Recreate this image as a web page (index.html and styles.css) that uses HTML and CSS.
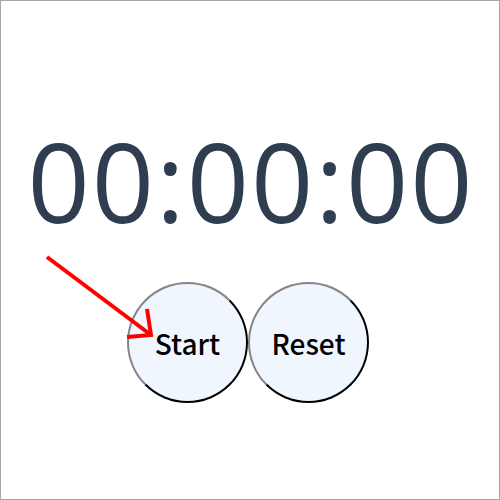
FILE: index.html
```html
<!DOCTYPE html>
<html>
<head>
<meta charset="utf-8">
<link rel="stylesheet" href="styles.css">
</head>
<body>
<div class="frame">
  <div class="timer">00:00:00</div>
  <div class="controls">
    <button class="btn">Start</button>
    <button class="btn">Reset</button>
  </div>
  <svg class="arrow" width="500" height="500" viewBox="0 0 500 500">
    <line x1="47" y1="257" x2="151" y2="335" stroke="#ff0000" stroke-width="4"/>
    <polyline points="147,309 151,335 127,337" fill="none" stroke="#ff0000" stroke-width="4"/>
  </svg>
</div>
</body>
</html>
```
FILE: styles.css
```css
html, body {
  margin: 0;
  padding: 0;
  background: #fff;
}
.frame {
  position: relative;
  width: 500px;
  height: 500px;
  box-sizing: border-box;
  border: 1px solid #a6a6a6;
  display: flex;
  flex-direction: column;
  align-items: center;
  padding-top: 125px;
}
.timer {
  font-family: "Open Sans", sans-serif;
  font-size: 109px;
  letter-spacing: 2px;
  line-height: 1;
  color: #2e3d4f;
  height: 110px;
  padding-left: 2px;
}
.controls {
  display: flex;
  margin-top: 46px;
  padding-right: 4px;
}
.btn {
  width: 121px;
  height: 121px;
  border-radius: 50%;
  border: 2px outset #767676;
  border-top-color: #858585;
  border-left-color: #858585;
  border-right-color: #1f1f1f;
  border-bottom-color: #1f1f1f;
  background: #eff6fe;
  font-family: "Noto Sans CJK JP", sans-serif;
  font-size: 28px;
  font-weight: 500;
  color: #000;
  padding: 0;
  margin: 0;
}
.arrow {
  position: absolute;
  left: -1px;
  top: -1px;
  pointer-events: none;
}
```
